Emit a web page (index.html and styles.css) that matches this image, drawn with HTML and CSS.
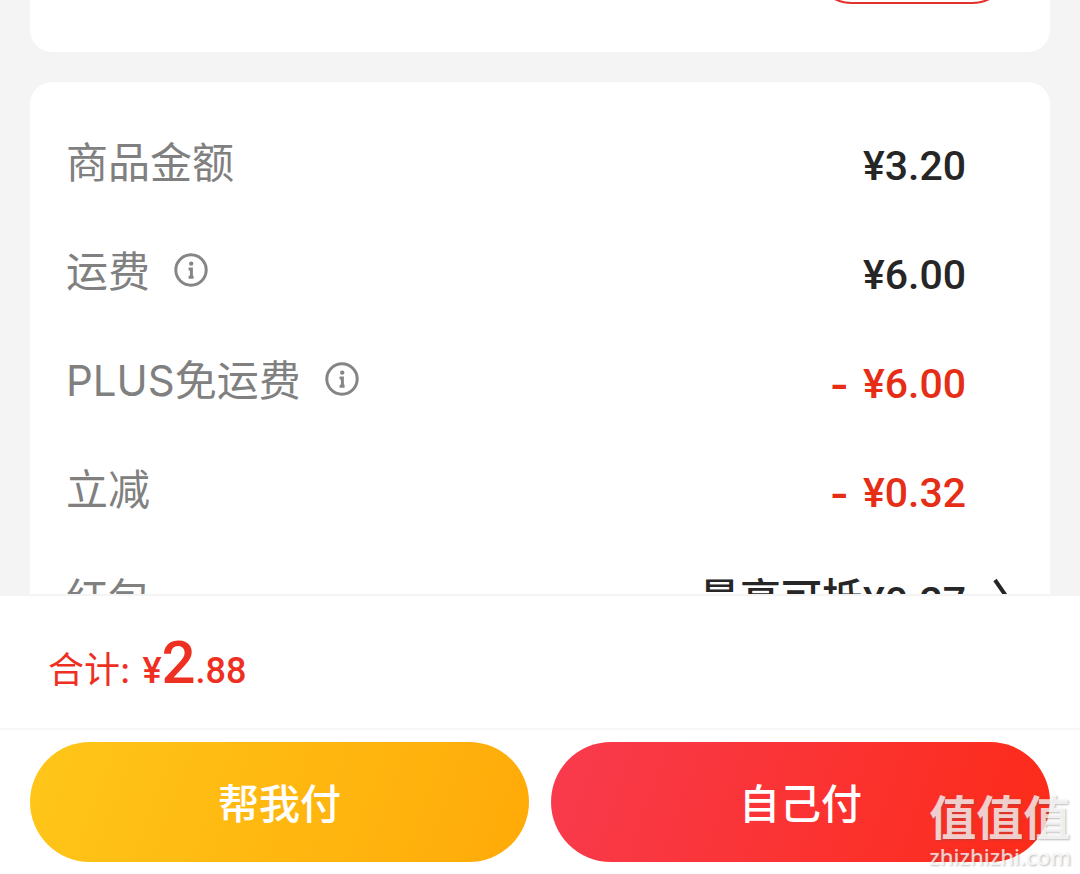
FILE: index.html
```
<!DOCTYPE html>
<html lang="zh-CN">
<head>
<meta charset="utf-8">
<meta name="viewport" content="width=device-width, initial-scale=1">
<link rel="stylesheet" href="styles.css">
</head>
<body>
<main class="content">
  <section class="card card-top">
    <button type="button" class="pill"></button>
  </section>
  <section class="card card-bill">
    <div class="row">
      <span class="label">商品金额</span>
      <span class="value">¥3.20</span>
      <span class="slot"></span>
    </div>
    <div class="row">
      <span class="label">运费</span>
      <svg class="info" viewBox="0 0 34 34" aria-hidden="true"><circle cx="17" cy="17" r="15.2"/><circle class="dot" cx="17.2" cy="10.6" r="2.2"/><path d="M14.6 16H17.4V23.5M14.6 24.2H19.6"/></svg>
      <span class="value">¥6.00</span>
      <span class="slot"></span>
    </div>
    <div class="row">
      <span class="label">PLUS免运费</span>
      <svg class="info" viewBox="0 0 34 34" aria-hidden="true"><circle cx="17" cy="17" r="15.2"/><circle class="dot" cx="17.2" cy="10.6" r="2.2"/><path d="M14.6 16H17.4V23.5M14.6 24.2H19.6"/></svg>
      <span class="value minus"><span class="sign">-</span><span>¥6.00</span></span>
      <span class="slot"></span>
    </div>
    <div class="row">
      <span class="label">立减</span>
      <span class="value minus"><span class="sign">-</span><span>¥0.32</span></span>
      <span class="slot"></span>
    </div>
    <div class="row">
      <span class="label">红包</span>
      <span class="value coupon"><span class="coupon-text">最高可抵</span><span>¥0.27</span></span>
      <span class="slot slot-arrow"><svg class="chevron" viewBox="0 0 18 36" aria-hidden="true"><path d="M3 2L14 18L3 34"/></svg></span>
    </div>
  </section>
</main>
<footer class="footer">
  <div class="total">
    <span class="total-label">合计:</span>
    <span class="total-price">¥<strong>2</strong>.88</span>
  </div>
  <div class="actions">
    <button type="button" class="btn btn-friend">帮我付</button>
    <button type="button" class="btn btn-self">自己付</button>
  </div>
</footer>
<div class="mark">
  <span class="mark-name">值值值</span>
  <span class="mark-url">zhizhizhi.com</span>
</div>
</body>
</html>
```
FILE: styles.css
```
* { box-sizing: border-box; }
body {
  margin: 0;
  height: 100vh;
  display: flex;
  flex-direction: column;
  position: relative;
  overflow: hidden;
  background: #f4f4f4;
  font-family: Inter, "Noto Sans CJK SC", sans-serif;
}
.content {
  flex: 1;
  min-height: 0;
  overflow: hidden;
  padding: 0 30px;
}
.card {
  background: #fff;
  border-radius: 22px;
}
.card-top {
  display: flex;
  justify-content: flex-end;
  margin-top: -80px;
  padding: 4px 38px 48px;
}
.pill {
  width: 200px;
  height: 80px;
  border: 2px solid #e2302c;
  border-radius: 40px;
  background: #fff;
}
.card-bill {
  margin-top: 30px;
  padding: 27px 0 27px 36px;
}
.row {
  display: flex;
  align-items: center;
  height: 109px;
}
.label {
  padding-bottom: 2px;
  font-size: 42px;
  line-height: 60px;
  color: #808080;
}
.info {
  width: 34px;
  height: 34px;
  margin: 0 0 6px 24px;
  fill: none;
  stroke: #858585;
  stroke-width: 3;
}
.info .dot {
  fill: #858585;
  stroke: none;
}
.value {
  margin-left: auto;
  padding-top: 4px;
  font: 500 41px/60px Roboto, "Noto Sans CJK SC", sans-serif;
  color: #262626;
}
.minus {
  display: flex;
  gap: 14px;
  color: #e62e17;
}
.sign {
  font-family: Inter, sans-serif;
  font-weight: 600;
}
.coupon {
  display: flex;
  align-items: center;
}
.coupon-text {
  padding-bottom: 6px;
}
.slot {
  width: 84px;
  padding-left: 26px;
}
.slot-arrow {
  padding-bottom: 8px;
}
.chevron {
  display: block;
  width: 18px;
  height: 36px;
  fill: none;
  stroke: #262626;
  stroke-width: 4;
}
.footer {
  background: #fff;
  border-top: 2px solid #f4f4f4;
}
.total {
  display: flex;
  align-items: baseline;
  gap: 12px;
  height: 134px;
  padding: 27px 48px 0;
  border-bottom: 2px solid #f6f6f6;
  color: #ee3023;
}
.total-label {
  font-size: 36px;
  line-height: 80px;
}
.total-price {
  font: 500 36px/80px Roboto, sans-serif;
}
.total-price strong {
  font-size: 60px;
  font-weight: 500;
}
.actions {
  display: grid;
  grid-template-columns: 1fr 1fr;
  gap: 22px;
  padding: 12px 30px;
}
.btn {
  height: 120px;
  padding: 0 0 2px;
  border: 0;
  border-radius: 60px;
  color: #fff;
  font: 500 41px/60px "Noto Sans CJK SC", sans-serif;
}
.btn-friend { background: linear-gradient(110deg, #ffc619, #ffaa08); }
.btn-self { background: linear-gradient(110deg, #f83b4e, #fd2b18); }
.mark {
  position: absolute;
  right: 9px;
  bottom: 3px;
  display: flex;
  flex-direction: column;
  color: rgba(255, 255, 255, 0.75);
  text-shadow: 1px 1px 2px rgba(90, 90, 90, 0.4);
}
.mark-name {
  font: 700 47px/52px "Noto Sans CJK SC", sans-serif;
}
.mark-url {
  font: 500 22px/30px "Noto Sans", sans-serif;
}
```
